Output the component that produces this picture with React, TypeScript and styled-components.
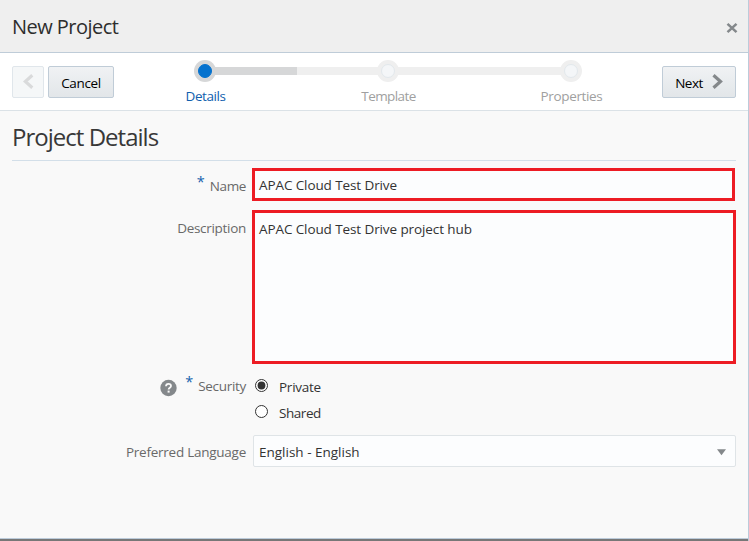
import React from 'react';
import styled, { createGlobalStyle } from 'styled-components';

const Global = createGlobalStyle`
  *, *::before, *::after { box-sizing: border-box; }
  body { margin: 0; background: #f9f9f9; font-family: "Open Sans", "Noto Sans", sans-serif; font-size: 13.5px; line-height: 20px; color: #333; }
  h1, h2 { margin: 0; font-weight: 400; }
`;

const Dialog = styled.div`
  width: 749px;
  height: 541px;
  display: flex;
  flex-direction: column;
  overflow: hidden;
  background: #f9f9f9;
  border-right: 1px solid #bccbda;
`;

const Header = styled.header`
  flex: none;
  height: 53px;
  padding: 0 10px 0 12px;
  display: flex;
  align-items: center;
  justify-content: space-between;
  background: #efefef;
  border-bottom: 1px solid #bfccd8;
`;

const DialogTitle = styled.h1`
  font-size: 20px;
  line-height: 28px;
  letter-spacing: -0.54px;
  padding-top: 2px;
  color: #2d2d2d;
`;

const CloseButton = styled.button`
  display: flex;
  padding: 4px 0 0;
  border: 0;
  background: none;
`;

const Toolbar = styled.div`
  flex: none;
  height: 58px;
  padding: 0 12px;
  display: flex;
  align-items: flex-start;
  background: #fff;
  border-bottom: 1px solid #dbe2e7;
`;

const Button = styled.button<{ $width: number; $muted?: boolean; $spacing?: number }>`
  flex: none;
  width: ${p => p.$width}px;
  height: 32px;
  margin-top: 13px;
  padding: 1px 0 0;
  display: flex;
  align-items: center;
  justify-content: center;
  gap: 9px;
  font: inherit;
  letter-spacing: ${p => p.$spacing ?? 0}px;
  color: #000;
  border: 1px solid ${p => (p.$muted ? '#e0e6eb' : '#c0ccd7')};
  border-radius: 2px;
  background: ${p => (p.$muted ? '#f5f7f8' : 'linear-gradient(#f0f2f4, #e2e6e9)')};
  svg { margin-top: -2px; }
`;

const Actions = styled.div`
  display: flex;
  gap: 4px;
  width: 101px;
`;

const Train = styled.ol`
  flex: none;
  width: 549px;
  margin: 0;
  padding: 7px 0 0;
  list-style: none;
  display: grid;
  grid-template-columns: repeat(3, 183px);
`;

const Step = styled.li`
  display: flex;
  flex-direction: column;
  align-items: center;
`;

const Track = styled.div`
  width: 100%;
  display: grid;
  grid-template-columns: 1fr 22px 1fr;
  align-items: center;
`;

const Rail = styled.span<{ $tone?: 'done' | 'todo' }>`
  height: 8px;
  margin: 0 -1px;
  z-index: ${p => (p.$tone === 'done' ? 1 : 0)};
  background: ${p => (p.$tone === 'done' ? '#d6d7d8' : p.$tone === 'todo' ? '#efefef' : 'transparent')};
`;

const Stop = styled.span<{ $current?: boolean }>`
  width: 22px;
  height: 22px;
  border-radius: 50%;
  z-index: 1;
  display: grid;
  place-items: center;
  background: ${p => (p.$current ? '#d6d7d8' : '#efefef')};
  &::after {
    content: '';
    width: 14px;
    height: 14px;
    border-radius: 50%;
    border: 1px solid ${p => (p.$current ? '#0572ce' : '#e2e8ec')};
    background: ${p => (p.$current ? '#0572ce' : '#f4f6f8')};
  }
`;

const StepLabel = styled.span<{ $current?: boolean; $spacing: number }>`
  margin-top: 4px;
  padding-left: 2px;
  color: ${p => (p.$current ? '#1060ae' : '#a0a0a0')};
  letter-spacing: ${p => p.$spacing}px;
`;

const Body = styled.main`
  flex: 1;
  padding: 0 12px;
`;

const SectionTitle = styled.h2`
  height: 50px;
  padding-top: 9px;
  font-size: 24px;
  line-height: 34px;
  letter-spacing: -0.98px;
  color: #383838;
  border-bottom: 1px solid #d3dfe9;
`;

const Form = styled.form`
  padding-top: 7px;
  display: grid;
  grid-template-columns: 234px 484px;
  grid-template-rows: 42px 154px 71px 33px;
  column-gap: 6px;
`;

const Label = styled.div<{ $top: number; $spacing: number }>`
  display: flex;
  justify-content: flex-end;
  align-items: flex-start;
  padding-top: ${p => p.$top}px;
  letter-spacing: ${p => p.$spacing}px;
  color: #696969;
  svg { flex: none; margin-top: 3px; }
`;

const Required = styled.span`
  margin: -4px 5px 0 8px;
  font-size: 14.5px;
  letter-spacing: 0;
  color: #1763ae;
`;

const Field = styled.div<{ $short?: boolean; $height: number; $top: number }>`
  width: ${p => (p.$short ? 483 : 484)}px;
  height: ${p => p.$height}px;
  padding: ${p => p.$top}px 4px 0;
  border: 3px solid #ed1c24;
  background: #fcfdfe;
  letter-spacing: -0.1px;
  color: #333;
`;

const Options = styled.div`
  padding-top: 13px;
  display: flex;
  flex-direction: column;
  gap: 6px;
`;

const Option = styled.label<{ $spacing: number }>`
  display: flex;
  align-items: flex-start;
  gap: 10px;
  padding-left: 3px;
  letter-spacing: ${p => p.$spacing}px;
  svg { margin-top: 2px; }
`;

const Select = styled.div`
  height: 32px;
  width: 483px;
  margin-left: 1px;
  padding: 2px 9px 0 5px;
  display: flex;
  align-items: center;
  justify-content: space-between;
  border: 1px solid #dfe4e7;
  border-radius: 2px;
  background: #fcfdfe;
`;

const Footer = styled.footer`
  flex: none;
  height: 3px;
  margin-right: -1px;
  border-top: 1px solid #bccbda;
  background: #777;
`;

function Radio({ checked }: { checked?: boolean }) {
  return (
    <svg width="14" height="14" viewBox="0 0 14 14">
      <circle cx="6.5" cy="6.5" r="6" fill="#fff" stroke="#333" />
      {checked && <circle cx="6.5" cy="6.5" r="3.9" fill="#333" />}
    </svg>
  );
}

function Chevron({ dir }: { dir: 'left' | 'right' }) {
  return (
    <svg width="11" height="15" viewBox="0 0 11 15">
      <path d={dir === 'left' ? 'M9.3 1.2 2.3 7.5l7 6.3' : 'M1.5 1.2l7 6.3-7 6.3'} fill="none"
        stroke={dir === 'left' ? '#d9dadb' : '#84888b'} strokeWidth="3.2" />
    </svg>
  );
}

const steps = [
  { label: 'Details', spacing: -0.45, before: undefined, after: 'done' },
  { label: 'Template', spacing: -0.6, before: 'todo', after: 'todo' },
  { label: 'Properties', spacing: -0.36, before: 'todo', after: undefined },
] as const;

export default function App() {
  return (
    <>
      <Global />
      <Dialog>
        <Header>
          <DialogTitle>New Project</DialogTitle>
          <CloseButton aria-label="Close">
            <svg width="12" height="12" viewBox="0 0 12 12">
              <path d="m1.5 1.8 9 8.4m0-8.4-9 8.4" stroke="#84888b" strokeWidth="2.5" />
            </svg>
          </CloseButton>
        </Header>
        <Toolbar>
          <Actions>
            <Button $width={32} $muted aria-label="Back"><Chevron dir="left" /></Button>
            <Button $width={66} $spacing={-0.35}>Cancel</Button>
          </Actions>
          <Train>
            {steps.map((s, i) => (
              <Step key={s.label}>
                <Track>
                  <Rail $tone={s.before} />
                  <Stop $current={i === 0} />
                  <Rail $tone={s.after} />
                </Track>
                <StepLabel $current={i === 0} $spacing={s.spacing}>{s.label}</StepLabel>
              </Step>
            ))}
          </Train>
          <Button $width={74} $spacing={-0.5}>Next<Chevron dir="right" /></Button>
        </Toolbar>
        <Body>
          <SectionTitle>Project Details</SectionTitle>
          <Form>
            <Label $top={8} $spacing={-0.4}><Required>*</Required>Name</Label>
            <Field $short $height={33} $top={4}>APAC Cloud Test Drive</Field>
            <Label $top={8} $spacing={-0.3}>Description</Label>
            <Field $height={154} $top={6}>APAC Cloud Test Drive project hub</Field>
            <Label $top={12} $spacing={-0.3}>
              <svg width="17" height="18" viewBox="0 0 17 18">
                <circle cx="8.5" cy="9" r="8.2" fill="#84888b" />
                <path d="M6 7.3C6 5.7 7 4.8 8.5 4.8s2.5.9 2.5 2.2c0 1.8-2.4 1.8-2.4 3.6" fill="none" stroke="#f9f9f9" strokeWidth="1.8" />
                <path d="M7.6 11.6h2v2h-2z" fill="#f9f9f9" />
              </svg>
              <Required>*</Required>Security
            </Label>
            <Options>
              <Option $spacing={-0.25}><Radio checked />Private</Option>
              <Option $spacing={-0.45}><Radio />Shared</Option>
            </Options>
            <Label $top={7} $spacing={-0.25}>Preferred Language</Label>
            <Select>
              English - English
              <svg width="9" height="7" viewBox="0 0 9 7"><path d="M0 .3h9L4.5 6.3z" fill="#84888b" /></svg>
            </Select>
          </Form>
        </Body>
        <Footer />
      </Dialog>
    </>
  );
}
